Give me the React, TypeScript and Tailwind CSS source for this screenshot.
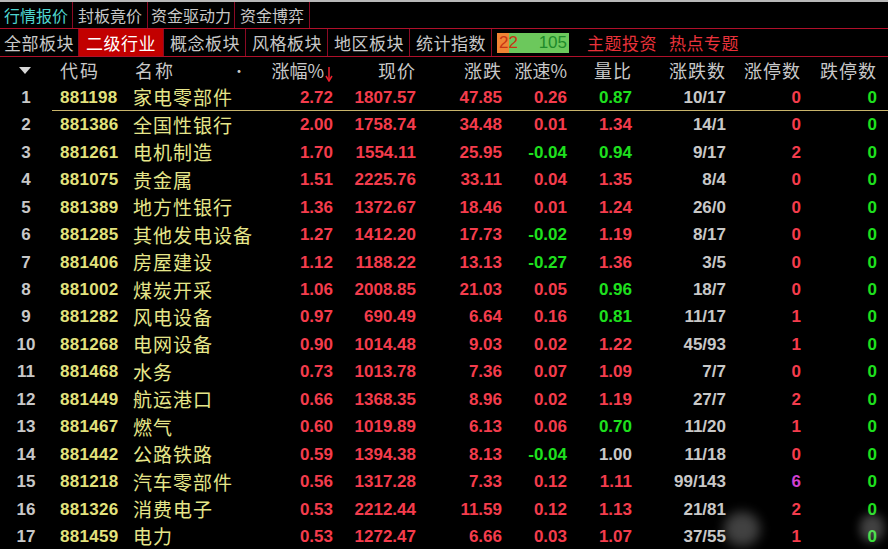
import React from "react";

type Row = {
  code: string;
  name: string;
  pct: string;
  price: string;
  chg: string;
  speed: string;
  ratio: string;
  updown: string;
  up: string;
  down: string;
};

const rows: Row[] = [
  { code: "881198", name: "家电零部件", pct: "2.72", price: "1807.57", chg: "47.85", speed: "0.26", ratio: "0.87", updown: "10/17", up: "0", down: "0" },
  { code: "881386", name: "全国性银行", pct: "2.00", price: "1758.74", chg: "34.48", speed: "0.01", ratio: "1.34", updown: "14/1", up: "0", down: "0" },
  { code: "881261", name: "电机制造", pct: "1.70", price: "1554.11", chg: "25.95", speed: "-0.04", ratio: "0.94", updown: "9/17", up: "2", down: "0" },
  { code: "881075", name: "贵金属", pct: "1.51", price: "2225.76", chg: "33.11", speed: "0.04", ratio: "1.35", updown: "8/4", up: "0", down: "0" },
  { code: "881389", name: "地方性银行", pct: "1.36", price: "1372.67", chg: "18.46", speed: "0.01", ratio: "1.24", updown: "26/0", up: "0", down: "0" },
  { code: "881285", name: "其他发电设备", pct: "1.27", price: "1412.20", chg: "17.73", speed: "-0.02", ratio: "1.19", updown: "8/17", up: "0", down: "0" },
  { code: "881406", name: "房屋建设", pct: "1.12", price: "1188.22", chg: "13.13", speed: "-0.27", ratio: "1.36", updown: "3/5", up: "0", down: "0" },
  { code: "881002", name: "煤炭开采", pct: "1.06", price: "2008.85", chg: "21.03", speed: "0.05", ratio: "0.96", updown: "18/7", up: "0", down: "0" },
  { code: "881282", name: "风电设备", pct: "0.97", price: "690.49", chg: "6.64", speed: "0.16", ratio: "0.81", updown: "11/17", up: "1", down: "0" },
  { code: "881268", name: "电网设备", pct: "0.90", price: "1014.48", chg: "9.03", speed: "0.02", ratio: "1.22", updown: "45/93", up: "1", down: "0" },
  { code: "881468", name: "水务", pct: "0.73", price: "1013.78", chg: "7.36", speed: "0.07", ratio: "1.09", updown: "7/7", up: "0", down: "0" },
  { code: "881449", name: "航运港口", pct: "0.66", price: "1368.35", chg: "8.96", speed: "0.02", ratio: "1.19", updown: "27/7", up: "2", down: "0" },
  { code: "881467", name: "燃气", pct: "0.60", price: "1019.89", chg: "6.13", speed: "0.06", ratio: "0.70", updown: "11/20", up: "1", down: "0" },
  { code: "881442", name: "公路铁路", pct: "0.59", price: "1394.38", chg: "8.13", speed: "-0.04", ratio: "1.00", updown: "11/18", up: "0", down: "0" },
  { code: "881218", name: "汽车零部件", pct: "0.56", price: "1317.28", chg: "7.33", speed: "0.12", ratio: "1.11", updown: "99/143", up: "6", down: "0" },
  { code: "881326", name: "消费电子", pct: "0.53", price: "2212.44", chg: "11.59", speed: "0.12", ratio: "1.13", updown: "21/81", up: "2", down: "0" },
  { code: "881459", name: "电力", pct: "0.53", price: "1272.47", chg: "6.66", speed: "0.03", ratio: "1.07", updown: "37/55", up: "1", down: "0" },
];

const RED = "text-[#f43c4c]";
const GREEN = "text-[#1ee01e]";
const GRAY = "text-[#c8c8c8]";

const cjk = "font-['Noto_Sans_CJK_SC',sans-serif]";
const num = "font-['Liberation_Sans',Arial,sans-serif] font-bold text-[17px]";

function signColor(v: string) {
  if (v.startsWith("-")) return GREEN;
  return RED;
}

function ratioColor(v: string) {
  const n = parseFloat(v);
  if (n > 1) return RED;
  if (n < 1) return GREEN;
  return GRAY;
}

function upColor(v: string) {
  if (v === "6") return "text-[#d040d0]";
  return RED;
}

const topTabs = [
  { label: "行情报价", pad: "pl-[4px] pr-[4px] text-[#4fd6d0]" },
  { label: "封板竟价", pad: "px-[5px] text-[#c8c8c8]" },
  { label: "资金驱动力", pad: "px-[3px] text-[#c8c8c8]" },
  { label: "资金博弈", pad: "px-[5px] text-[#c8c8c8]" },
];
const subTabs = ["全部板块", "二级行业", "概念板块", "风格板块", "地区板块", "统计指数"];

export default function App() {
  return (
    <div className="relative h-[549px] w-[888px] overflow-hidden bg-black">
      <div className="h-[2px] bg-[#b8b8b8]" />

      {/* top tabs */}
      <div className={`flex h-[26px] items-center text-[16px] ${cjk}`}>
        {topTabs.map((t) => (
          <div key={t.label} className={`flex h-full items-center border-r border-[#8a0a24] ${t.pad}`}>
            {t.label}
          </div>
        ))}
      </div>
      <div className="h-px bg-[#b0102a]" />

      {/* sub tabs */}
      <div className={`flex h-[27px] items-center text-[17px] tracking-[0.5px] ${cjk}`}>
        {subTabs.map((t, i) => (
          <div
            key={t}
            className={`flex h-full items-center border-r border-[#8a0a24] ${
              i === 0 ? "pl-[4px] pr-[4px]" : i === 1 ? "px-[7px]" : "pl-[6px] pr-[5px]"
            } ${i === 1 ? "bg-[#c20000] text-white" : "text-[#c8c8c8]"}`}
          >
            {t}
          </div>
        ))}
        <div className="ml-[5px] flex h-[20px] w-[72px] items-center justify-between bg-[linear-gradient(to_right,#f08434_12px,#6cc85c_12px)] px-[2px] font-['Liberation_Sans',Arial,sans-serif] text-[17px] tracking-normal">
          <span className="text-[#c83414]">22</span>
          <span className="text-[#1e8a2a]">105</span>
        </div>
        <div className="ml-[18px] flex gap-[12px] text-[#e8323a]">
          <span>主题投资</span>
          <span>热点专题</span>
        </div>
      </div>
      <div className="h-px bg-[#b0102a]" />

      {/* header */}
      <div className={`flex h-[27px] items-center text-[18px] text-[#c8c8c8] ${cjk}`}>
        <div className="flex w-[52px] justify-center">
          <svg width="12" height="7" viewBox="0 0 12 7" className="-ml-[2px]">
            <polygon points="0,0 12,0 6,7" fill="#d8d8d8" />
          </svg>
        </div>
        <div className="w-[78px] pl-[8px] tracking-[2px]">代码</div>
        <div className="flex w-[140px] items-center justify-between pl-[5px] pr-[22px] tracking-[2px]">
          <span>名称</span>
          <span className="text-[14px]">•</span>
        </div>
        <div className="flex w-[63px] items-center justify-end whitespace-nowrap">
          <span>涨幅%</span>
          <svg width="8" height="16" viewBox="0 0 8 16" className="ml-[1px] mt-[6px]">
            <line x1="4" y1="1" x2="4" y2="14" stroke="#e8202c" strokeWidth="1.5" />
            <polyline points="1,10 4,15 7,10" fill="none" stroke="#e8202c" strokeWidth="1.5" />
          </svg>
        </div>
        <div className="w-[83px] text-right tracking-[1px]">现价</div>
        <div className="w-[86px] text-right tracking-[1px]">涨跌</div>
        <div className="w-[65px] whitespace-nowrap text-right">涨速%</div>
        <div className="w-[65px] text-right tracking-[1px]">量比</div>
        <div className="w-[94px] text-right tracking-[1px]">涨跌数</div>
        <div className="w-[75px] text-right tracking-[1px]">涨停数</div>
        <div className="w-[76px] text-right tracking-[1px]">跌停数</div>
      </div>

      {/* rows */}
      {rows.map((r, i) => (
        <div key={r.code} className="relative flex h-[27.44px] items-center">
          <div className={`w-[52px] text-center ${num} ${GRAY}`}>{i + 1}</div>
          <div className={`w-[78px] pl-[8px] tracking-[0.3px] ${num} text-[#e2e27c]`}>{r.code}</div>
          <div className={`w-[140px] whitespace-nowrap pl-[3px] text-[19px] tracking-[1px] text-[#e6e68a] ${cjk}`}>
            {r.name}
          </div>
          <div className={`w-[63px] text-right ${num} ${RED}`}>{r.pct}</div>
          <div className={`w-[83px] text-right ${num} ${RED}`}>{r.price}</div>
          <div className={`w-[86px] text-right ${num} ${RED}`}>{r.chg}</div>
          <div className={`w-[65px] text-right ${num} ${signColor(r.speed)}`}>{r.speed}</div>
          <div className={`w-[65px] text-right ${num} ${ratioColor(r.ratio)}`}>{r.ratio}</div>
          <div className={`w-[94px] text-right ${num} ${GRAY}`}>{r.updown}</div>
          <div className={`w-[75px] text-right ${num} ${upColor(r.up)}`}>{r.up}</div>
          <div className={`w-[76px] text-right ${num} ${GREEN}`}>{r.down}</div>
          {i === 0 && <div className="absolute bottom-0 left-[52px] right-0 h-px bg-[#c8b46a]" />}
        </div>
      ))}

      {/* watermark smudges */}
      <div className="absolute left-[724px] top-[512px] h-[34px] w-[36px] rounded-full bg-[#d8d8d8] opacity-30 blur-[6px]" />
      <div className="absolute left-[860px] top-[514px] h-[28px] w-[24px] rounded-full bg-[#d8d8d8] opacity-30 blur-[5px]" />
    </div>
  );
}
